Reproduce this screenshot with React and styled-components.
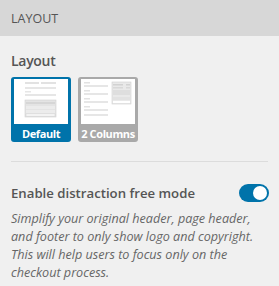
import React from "react";
import styled, { createGlobalStyle } from "styled-components";

const Global = createGlobalStyle`
  html, body { margin: 0; padding: 0; background: #f0f0f0; }
  body { font-family: "Open Sans", "Noto Sans", sans-serif; }
`;

const Panel = styled.div`
  width: 279px;
  height: 286px;
  background: #f0f0f0;
  overflow: hidden;
`;

const Header = styled.div`
  height: 36px;
  display: flex;
  align-items: center;
  padding: 0 11px;
  background: #d7d7d7;
  color: #555;
  font-size: 12.5px;
`;

const Section = styled.div`
  padding: 14px 11px 0 11px;
`;

const Label = styled.div`
  font-size: 14px;
  font-weight: 600;
  color: #555;
  line-height: 22px;
  letter-spacing: -0.3px;
`;

const Cards = styled.div`
  display: flex;
  gap: 7px;
  margin-top: 5px;
`;

const Card = styled.div`
  width: 60px;
  height: 65px;
  border-radius: 3px;
  background: ${(p) => (p.$active ? "#0073aa" : "#a9a9a9")};
  padding: 2px 3px 0 3px;
  box-sizing: border-box;
  display: flex;
  flex-direction: column;
`;

const Preview = styled.div`
  background: #fff;
  height: 45px;
  display: flex;
  align-items: stretch;
  justify-content: center;
`;

const CardLabel = styled.div`
  flex: 1;
  display: flex;
  align-items: center;
  justify-content: center;
  color: #fff;
  font-size: 11px;
  font-weight: 700;
  letter-spacing: -0.4px;
  white-space: nowrap;
`;

const Divider = styled.div`
  height: 1px;
  background: #dcdcdc;
  margin: 19px 0 0 0;
`;

const ToggleRow = styled.div`
  display: flex;
  align-items: center;
  justify-content: space-between;
  margin-top: 22px;
`;

const ToggleLabel = styled.div`
  font-size: 13.2px;
  font-weight: 600;
  color: #555;
`;

const Switch = styled.div`
  width: 30px;
  height: 18px;
  border-radius: 9px;
  background: #0073aa;
  position: relative;
  margin-right: -1px;
  &::after {
    content: "";
    position: absolute;
    right: 2px;
    top: 2px;
    width: 14px;
    height: 14px;
    border-radius: 50%;
    background: #fff;
  }
`;

const Description = styled.p`
  margin: 8px 0 0 0;
  font-size: 12.6px;
  font-style: italic;
  line-height: 18px;
  color: #666;
`;

const DefaultThumb = () => (
  <svg width="54" height="45" viewBox="0 0 54 45">
    <rect x="11" y="3" width="14" height="2" fill="#e2e2e2" />
    <rect x="27" y="3" width="15" height="2" fill="#e2e2e2" />
    <rect x="11" y="8" width="31" height="2" fill="#e6e6e6" />
    <rect x="11" y="12" width="6" height="1.5" fill="#e6e6e6" />
    <rect x="11" y="15" width="31" height="2" fill="#e6e6e6" />
    <rect x="11" y="21" width="31" height="17" fill="#e4e4e4" stroke="#cfcfcf" strokeWidth="0.6" />
    <rect x="12" y="23" width="29" height="2" fill="#d6d6d6" />
    <rect x="12" y="27" width="29" height="3" fill="#ececec" />
    <rect x="12" y="31" width="29" height="3" fill="#ececec" />
    <rect x="12" y="35" width="29" height="2" fill="#fff" stroke="#cfcfcf" strokeWidth="0.5" />
  </svg>
);

const TwoColThumb = () => (
  <svg width="54" height="45" viewBox="0 0 54 45">
    <rect x="3" y="3" width="6" height="1.5" fill="#e2e2e2" />
    <rect x="3" y="6" width="24" height="2" fill="#e6e6e6" />
    <rect x="3" y="11" width="6" height="1.5" fill="#e2e2e2" />
    <rect x="3" y="14" width="24" height="2" fill="#e6e6e6" />
    <rect x="3" y="19" width="6" height="1.5" fill="#e2e2e2" />
    <rect x="3" y="22" width="24" height="2" fill="#e6e6e6" />
    <rect x="3" y="27" width="6" height="1.5" fill="#e2e2e2" />
    <rect x="3" y="30" width="24" height="2" fill="#e6e6e6" />
    <rect x="3" y="35" width="24" height="2" fill="#e6e6e6" />
    <rect x="31" y="3" width="19" height="22" fill="#e9e9e9" stroke="#cfcfcf" strokeWidth="0.6" />
    <rect x="32" y="5" width="10" height="1.5" fill="#d2d2d2" />
    <rect x="45" y="5" width="4" height="1.5" fill="#d2d2d2" />
    <rect x="32" y="8" width="10" height="1.5" fill="#d8d8d8" />
    <rect x="45" y="8" width="4" height="1.5" fill="#d8d8d8" />
    <rect x="32" y="11" width="17" height="5" fill="#dedede" />
    <rect x="32" y="18" width="17" height="3" fill="#e2e2e2" />
    <rect x="32" y="22" width="17" height="2" fill="#fff" />
  </svg>
);

export default function App() {
  return (
    <>
      <Global />
      <Panel>
        <Header>LAYOUT</Header>
        <Section>
          <Label>Layout</Label>
          <Cards>
            <Card $active>
              <Preview>
                <DefaultThumb />
              </Preview>
              <CardLabel>Default</CardLabel>
            </Card>
            <Card>
              <Preview>
                <TwoColThumb />
              </Preview>
              <CardLabel>2 Columns</CardLabel>
            </Card>
          </Cards>
          <Divider />
          <ToggleRow>
            <ToggleLabel>Enable distraction free mode</ToggleLabel>
            <Switch />
          </ToggleRow>
          <Description>
            Simplify your original header, page header, and footer to only show
            logo and copyright. This will help users to focus only on the
            checkout process.
          </Description>
        </Section>
      </Panel>
    </>
  );
}
